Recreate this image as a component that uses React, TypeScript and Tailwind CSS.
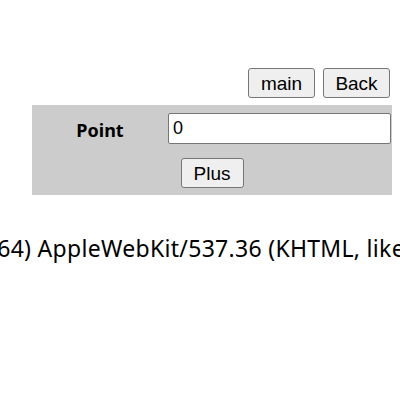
export default function App() {
  const ua =
    'Mozilla/5.0 (Windows NT 10.0; Win64; x64) AppleWebKit/537.36 (KHTML, like Gecko) Chrome/120.0.0.0 Safari/537.36'

  return (
    <div className="w-[400px] h-[400px] overflow-hidden bg-white text-black">
      <div className="pt-[68px] pl-[32px] pr-[8px]">
        <div className="flex justify-end gap-[8px] pr-[2px]">
          <button className="h-[30px] w-[67px] rounded-[3px] border border-[#767676] bg-[#efefef] font-['Liberation_Sans',Arial,sans-serif] text-[19px] leading-none">
            main
          </button>
          <button className="h-[30px] w-[67px] rounded-[3px] border border-[#767676] bg-[#efefef] font-['Liberation_Sans',Arial,sans-serif] text-[19px] leading-none">
            Back
          </button>
        </div>
        <div className="mt-[7px] h-[90px] bg-[#cccccc] pt-[8px]">
          <div className="flex items-center">
            <div className="w-[136px] pt-[3px] text-center font-['Noto_Sans',sans-serif] text-[18px] font-bold">
              Point
            </div>
            <input
              defaultValue="0"
              className="h-[31px] w-[223px] rounded-[2px] border border-[#767676] bg-white px-[4px] font-['Liberation_Sans',Arial,sans-serif] text-[18px] outline-none"
            />
          </div>
          <div className="mt-[14px] flex justify-center">
            <button className="h-[30px] w-[63px] rounded-[3px] border border-[#767676] bg-[#efefef] font-['Liberation_Sans',Arial,sans-serif] text-[19px] leading-none">
              Plus
            </button>
          </div>
        </div>
      </div>
      <div className="mt-[36px] flex justify-center">
        <p className="ml-[8px] whitespace-nowrap font-['Noto_Sans',sans-serif] text-[23px] tracking-[0.3px]">{ua}</p>
      </div>
    </div>
  )
}
